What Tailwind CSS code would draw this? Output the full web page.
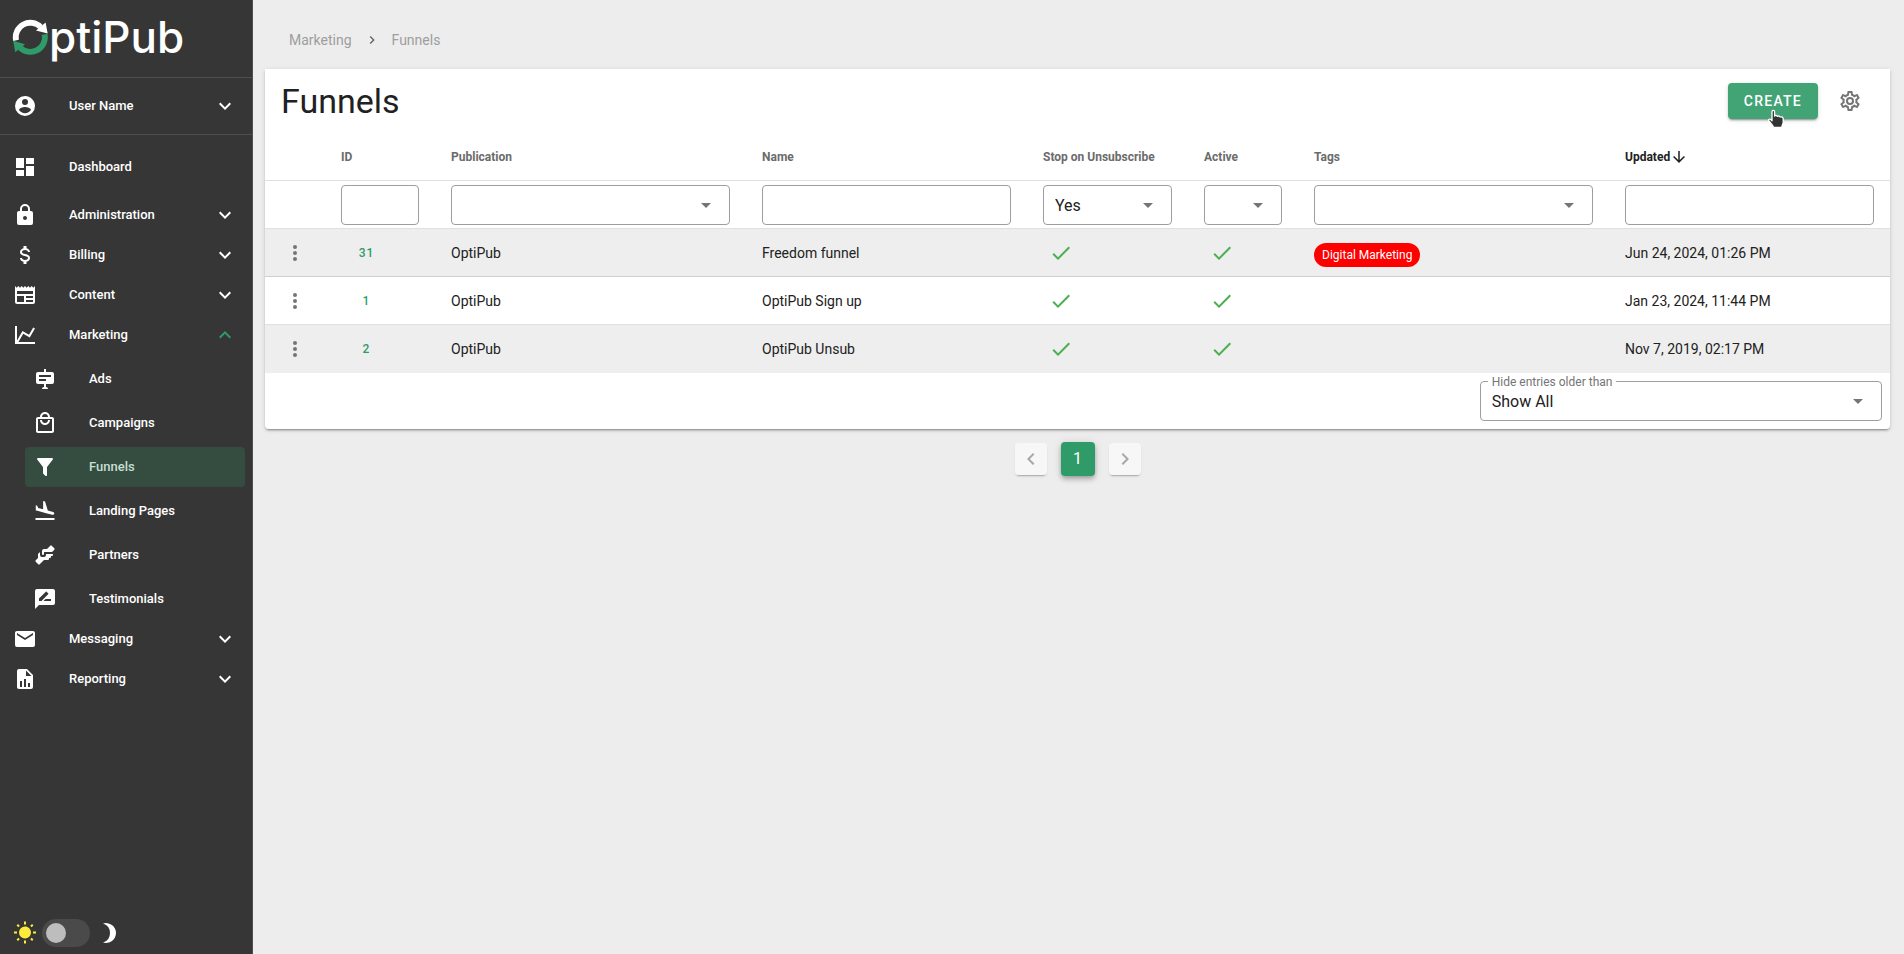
<!DOCTYPE html>
<html lang="en">
<head>
<meta charset="utf-8">
<meta name="viewport" content="width=device-width, initial-scale=1">
<title>Funnels - OptiPub</title>
<script src="https://cdn.jsdelivr.net/npm/@tailwindcss/browser@4"></script>
</head>
<body class="flex min-h-screen bg-[#ededed] font-[Roboto,sans-serif] text-sm text-[#212121]">

<svg class="hidden" aria-hidden="true">
  <symbol id="account" viewBox="0 0 24 24"><path d="M12,19.2C9.5,19.2 7.29,17.92 6,16C6.03,14 10,12.9 12,12.9C14,12.9 17.97,14 18,16C16.71,17.92 14.5,19.2 12,19.2M12,5A3,3 0 0,1 15,8A3,3 0 0,1 12,11A3,3 0 0,1 9,8A3,3 0 0,1 12,5M12,2A10,10 0 0,0 2,12A10,10 0 0,0 12,22A10,10 0 0,0 22,12C22,6.47 17.5,2 12,2Z"/></symbol>
  <symbol id="dashboard" viewBox="0 0 24 24"><path d="M13,3V9H21V3M13,21H21V11H13M3,21H11V15H3M3,13H11V3H3V13Z"/></symbol>
  <symbol id="lock" viewBox="0 0 24 24"><path d="M12,17A2,2 0 0,0 14,15C14,13.89 13.1,13 12,13A2,2 0 0,0 10,15A2,2 0 0,0 12,17M18,8A2,2 0 0,1 20,10V20A2,2 0 0,1 18,22H6A2,2 0 0,1 4,20V10C4,8.89 4.9,8 6,8H7V6A5,5 0 0,1 12,1A5,5 0 0,1 17,6V8H18M12,3A3,3 0 0,0 9,6V8H15V6A3,3 0 0,0 12,3Z"/></symbol>
  <symbol id="dollar" viewBox="0 0 24 24"><path d="M7,15H9C9,16.08 10.37,17 12,17C13.63,17 15,16.08 15,15C15,13.9 13.96,13.5 11.76,12.97C9.64,12.44 7,11.78 7,9C7,7.21 8.47,5.69 10.5,5.18V3H13.5V5.18C15.53,5.69 17,7.21 17,9H15C15,7.92 13.63,7 12,7C10.37,7 9,7.92 9,9C9,10.1 10.04,10.5 12.24,11.03C14.36,11.56 17,12.22 17,15C17,16.79 15.53,18.31 13.5,18.82V21H10.5V18.82C8.47,18.31 7,16.79 7,15Z"/></symbol>
  <symbol id="newspaper" viewBox="0 0 24 24"><path d="M20,11H4V8H20M20,15H13V13H20M20,19H13V17H20M11,19H4V13H11M20.33,4.67L18.67,3L17,4.67L15.33,3L13.67,4.67L12,3L10.33,4.67L8.67,3L7,4.67L5.33,3L3.67,4.67L2,3V19A2,2 0 0,0 4,21H20A2,2 0 0,0 22,19V3L20.33,4.67Z"/></symbol>
  <symbol id="chart" viewBox="0 0 24 24"><path d="M16,11.78L20.24,4.45L21.97,5.45L16.74,14.5L10.23,10.75L5.46,19H22V21H2V3H4V17.54L9.5,8L16,11.78Z"/></symbol>
  <symbol id="billboard" viewBox="0 0 24 24"><path fill-rule="evenodd" d="M11,2H13V5H19A2,2 0 0,1 21,7V15A2,2 0 0,1 19,17H13V20C14.2,20 15,20.8 15,22H9C9,20.8 9.8,20 11,20V17H5A2,2 0 0,1 3,15V7A2,2 0 0,1 5,5H11V2M6,8V10H18V8H6M6,12V14H13V12H6Z"/></symbol>
  <symbol id="bag" viewBox="0 0 24 24"><path d="M19 6H17C17 3.2 14.8 1 12 1S7 3.2 7 6H5C3.9 6 3 6.9 3 8V20C3 21.1 3.9 22 5 22H19C20.1 22 21 21.1 21 20V8C21 6.9 20.1 6 19 6M12 3C13.7 3 15 4.3 15 6H9C9 4.3 10.3 3 12 3M19 20H5V8H19V20M12 12C10.3 12 9 10.7 9 9H7C7 11.8 9.2 14 12 14S17 11.8 17 9H15C15 10.7 13.7 12 12 12Z"/></symbol>
  <symbol id="filter" viewBox="0 0 24 24"><path d="M14,12V19.88C14.04,20.18 13.94,20.5 13.71,20.71C13.32,21.1 12.69,21.1 12.3,20.71L10.29,18.7C10.06,18.47 9.96,18.16 10,17.87V12H9.97L4.21,4.62C3.87,4.19 3.95,3.56 4.38,3.22C4.57,3.08 4.78,3 5,3H19C19.22,3 19.43,3.08 19.62,3.22C20.05,3.56 20.13,4.19 19.79,4.62L14.03,12H14Z"/></symbol>
  <symbol id="landing" viewBox="0 0 24 24"><path d="M2.5,19H21.5V21H2.5V19M9.68,13.27L14.03,14.43L19.34,15.85C20.14,16.06 20.96,15.59 21.18,14.79C21.39,14 20.92,13.17 20.12,12.95L14.81,11.53L12.05,2.5L10.12,2V10.28L5.15,8.95L4.22,6.63L2.77,6.24V11.41L4.37,11.84L9.68,13.27Z"/></symbol>
  <symbol id="handshake" viewBox="0 0 24 24"><path d="M11 6H14L17.29 2.7A1 1 0 0 1 18.71 2.7L21.29 5.29A1 1 0 0 1 21.29 6.7L19 9H11V11A1 1 0 0 1 10 12A1 1 0 0 1 9 11V8A2 2 0 0 1 11 6M5 11V15L2.71 17.29A1 1 0 0 0 2.71 18.71L5.29 21.29A1 1 0 0 0 6.71 21.29L11 17H15A1 1 0 0 0 16 16V15H17A1 1 0 0 0 18 14V13H19A1 1 0 0 0 20 12V11H13V12A2 2 0 0 1 11 14H9A2 2 0 0 1 7 12V9Z"/></symbol>
  <symbol id="message" viewBox="0 0 24 24"><path d="M18,14H10.5L12.5,12H18M6,14V11.5L12.88,4.64C13.07,4.45 13.39,4.45 13.59,4.64L15.35,6.41C15.55,6.61 15.55,6.92 15.35,7.12L8.47,14M20,2H4A2,2 0 0,0 2,4V22L6,18H20A2,2 0 0,0 22,16V4C22,2.89 21.1,2 20,2Z"/></symbol>
  <symbol id="email" viewBox="0 0 24 24"><path d="M20,8L12,13L4,8V6L12,11L20,6M20,4H4C2.89,4 2,4.89 2,6V18A2,2 0 0,0 4,20H20A2,2 0 0,0 22,18V6C22,4.89 21.1,4 20,4Z"/></symbol>
  <symbol id="report" viewBox="0 0 24 24"><path d="M13,9H18.5L13,3.5V9M6,2H14L20,8V20A2,2 0 0,1 18,22H6C4.89,22 4,21.1 4,20V4C4,2.89 4.89,2 6,2M7,20H9V14H7V20M11,20H13V12H11V20M15,20H17V16H15V20Z"/></symbol>
  <symbol id="sun" viewBox="0 0 24 24"><path d="M3.55,18.54L4.96,19.95L6.76,18.16L5.34,16.74M11,22.45C11.32,22.45 13,22.45 13,22.45V19.5H11M12,5.5A6,6 0 0,0 6,11.5A6,6 0 0,0 12,17.5A6,6 0 0,0 18,11.5C18,8.18 15.31,5.5 12,5.5M20,12.5H23V10.5H20M17.24,18.16L19.04,19.95L20.45,18.54L18.66,16.74M20.45,4.46L19.04,3.05L17.24,4.84L18.66,6.26M13,0.55H11V3.5H13M4,10.5H1V12.5H4M6.76,4.84L4.96,3.05L3.55,4.46L5.34,6.26L6.76,4.84Z"/></symbol>
  <symbol id="moon" viewBox="0 0 24 24"><path d="M6 2.46A10 10 0 1 1 6 21.54A10 10 0 0 0 6 2.46Z"/></symbol>
  <symbol id="down" viewBox="0 0 24 24"><path d="M7.41,8.58L12,13.17L16.59,8.58L18,10L12,16L6,10L7.41,8.58Z"/></symbol>
  <symbol id="up" viewBox="0 0 24 24"><path d="M7.41,15.41L12,10.83L16.59,15.41L18,14L12,8L6,14L7.41,15.41Z"/></symbol>
  <symbol id="left" viewBox="0 0 24 24"><path d="M15.41,16.58L10.83,12L15.41,7.41L14,6L8,12L14,18L15.41,16.58Z"/></symbol>
  <symbol id="right" viewBox="0 0 24 24"><path d="M8.59,16.58L13.17,12L8.59,7.41L10,6L16,12L10,18L8.59,16.58Z"/></symbol>
  <symbol id="caret" viewBox="0 0 24 24"><path d="M7,10L12,15L17,10H7Z"/></symbol>
  <symbol id="check" viewBox="0 0 24 24"><path d="M21,7L9,19L3.5,13.5L4.91,12.09L9,16.17L19.59,5.59L21,7Z"/></symbol>
  <symbol id="dots" viewBox="0 0 24 24"><path d="M12,16A2,2 0 0,1 14,18A2,2 0 0,1 12,20A2,2 0 0,1 10,18A2,2 0 0,1 12,16M12,10A2,2 0 0,1 14,12A2,2 0 0,1 12,14A2,2 0 0,1 10,12A2,2 0 0,1 12,10M12,4A2,2 0 0,1 14,6A2,2 0 0,1 12,8A2,2 0 0,1 10,6A2,2 0 0,1 12,4Z"/></symbol>
  <symbol id="arrow" viewBox="0 0 24 24"><path d="M11,4H13V16L18.5,10.5L19.92,11.92L12,19.84L4.08,11.92L5.5,10.5L11,16V4Z"/></symbol>
  <symbol id="cog" viewBox="0 0 24 24"><path d="M12,8A4,4 0 0,1 16,12A4,4 0 0,1 12,16A4,4 0 0,1 8,12A4,4 0 0,1 12,8M12,10A2,2 0 0,0 10,12A2,2 0 0,0 12,14A2,2 0 0,0 14,12A2,2 0 0,0 12,10M10,22C9.75,22 9.54,21.82 9.5,21.58L9.13,18.93C8.5,18.68 7.96,18.34 7.44,17.94L4.95,18.95C4.73,19.03 4.46,18.95 4.34,18.73L2.34,15.27C2.21,15.05 2.27,14.78 2.46,14.63L4.57,12.97L4.5,12L4.57,11L2.46,9.37C2.27,9.22 2.21,8.95 2.34,8.73L4.34,5.27C4.46,5.05 4.73,4.96 4.95,5.05L7.44,6.05C7.96,5.66 8.5,5.32 9.13,5.07L9.5,2.42C9.54,2.18 9.75,2 10,2H14C14.25,2 14.46,2.18 14.5,2.42L14.87,5.07C15.5,5.32 16.04,5.66 16.56,6.05L19.05,5.05C19.27,4.96 19.54,5.05 19.66,5.27L21.66,8.73C21.79,8.95 21.73,9.22 21.54,9.37L19.43,11L19.5,12L19.43,13L21.54,14.63C21.73,14.78 21.79,15.05 21.66,15.27L19.66,18.73C19.54,18.95 19.27,19.04 19.05,18.95L16.56,17.95C16.04,18.34 15.5,18.68 14.87,18.93L14.5,21.58C14.46,21.82 14.25,22 14,22H10M11.25,4L10.88,6.61C9.68,6.86 8.62,7.5 7.85,8.39L5.44,7.35L4.69,8.65L6.8,10.2C6.4,11.37 6.4,12.64 6.8,13.8L4.68,15.36L5.43,16.66L7.86,15.62C8.63,16.5 9.68,17.14 10.87,17.38L11.24,20H12.76L13.13,17.39C14.32,17.14 15.37,16.5 16.14,15.62L18.57,16.66L19.32,15.36L17.2,13.81C17.6,12.64 17.6,11.37 17.2,10.2L19.31,8.65L18.56,7.35L16.15,8.39C15.38,7.5 14.32,6.86 13.12,6.62L12.75,4H11.25Z"/></symbol>
</svg>

<aside class="flex w-[253px] shrink-0 flex-col border-r border-[#4e4e4e] bg-[#363636] text-[13px] font-medium text-white">
  <a href="#" aria-label="OptiPub" class="block h-[77px]">
    <svg class="h-[77px] w-[200px]" viewBox="0 0 200 77">
      <path fill="none" stroke="#fff" stroke-width="5.8" d="M16 40.3A14.6 14.6 0 0 1 40.6 27"/>
      <path fill="#fff" d="M45.6 22.4L47.7 33.6L36 30.6Z"/>
      <path fill="none" stroke="#2f9b68" stroke-width="5.8" d="M44.6 34.3A14.6 14.6 0 0 1 20 47.6"/>
      <path fill="#2f9b68" d="M15.2 52.2L13.2 40.8L25 44.2Z"/>
      <text x="49" y="53" fill="#fff" font-family="Inter, Liberation Sans, sans-serif" font-size="44" font-weight="500">ptiPub</text>
    </svg>
  </a>
  <div class="border-y border-[#4e4e4e]">
    <button type="button" class="flex h-14 w-full items-center pr-[15px] pl-[13px] text-left">
      <svg class="mr-8 size-6 fill-current"><use href="#account"/></svg><span class="flex-1">User Name</span><svg class="size-6 fill-current"><use href="#down"/></svg>
    </button>
  </div>
  <nav class="flex flex-1 flex-col pt-3">
    <a href="#" class="mb-2 flex h-10 items-center pr-[15px] pl-[13px]"><svg class="mr-8 size-6 fill-current"><use href="#dashboard"/></svg>Dashboard</a>
    <button type="button" class="flex h-10 items-center pr-[15px] pl-[13px] text-left"><svg class="mr-8 size-6 fill-current"><use href="#lock"/></svg><span class="flex-1">Administration</span><svg class="size-6 fill-current"><use href="#down"/></svg></button>
    <button type="button" class="flex h-10 items-center pr-[15px] pl-[13px] text-left"><svg class="mr-8 size-6 fill-current"><use href="#dollar"/></svg><span class="flex-1">Billing</span><svg class="size-6 fill-current"><use href="#down"/></svg></button>
    <button type="button" class="flex h-10 items-center pr-[15px] pl-[13px] text-left"><svg class="mr-8 size-6 fill-current"><use href="#newspaper"/></svg><span class="flex-1">Content</span><svg class="size-6 fill-current"><use href="#down"/></svg></button>
    <button type="button" aria-expanded="true" class="flex h-10 items-center pr-[15px] pl-[13px] text-left"><svg class="mr-8 size-6 fill-current"><use href="#chart"/></svg><span class="flex-1">Marketing</span><svg class="size-6 fill-[#2f9b68]"><use href="#up"/></svg></button>
    <div class="flex flex-col gap-1 pt-1 pr-[7px] pl-[25px]">
      <a href="#" class="flex h-10 items-center rounded-sm px-2"><svg class="mr-8 size-6 fill-current"><use href="#billboard"/></svg>Ads</a>
      <a href="#" class="flex h-10 items-center rounded-sm px-2"><svg class="mr-8 size-6 fill-current"><use href="#bag"/></svg>Campaigns</a>
      <a href="#" aria-current="page" class="flex h-10 items-center rounded-sm bg-[#354d40] px-2 text-[#c5dfd2]"><svg class="mr-8 size-6 fill-white"><use href="#filter"/></svg>Funnels</a>
      <a href="#" class="flex h-10 items-center rounded-sm px-2"><svg class="mr-8 size-6 fill-current"><use href="#landing"/></svg>Landing Pages</a>
      <a href="#" class="flex h-10 items-center rounded-sm px-2"><svg class="mr-8 size-6 fill-current"><use href="#handshake"/></svg>Partners</a>
      <a href="#" class="flex h-10 items-center rounded-sm px-2"><svg class="mr-8 size-6 fill-current"><use href="#message"/></svg>Testimonials</a>
    </div>
    <button type="button" class="flex h-10 items-center pr-[15px] pl-[13px] text-left"><svg class="mr-8 size-6 fill-current"><use href="#email"/></svg><span class="flex-1">Messaging</span><svg class="size-6 fill-current"><use href="#down"/></svg></button>
    <button type="button" class="flex h-10 items-center pr-[15px] pl-[13px] text-left"><svg class="mr-8 size-6 fill-current"><use href="#report"/></svg><span class="flex-1">Reporting</span><svg class="size-6 fill-current"><use href="#down"/></svg></button>
  </nav>
  <div class="flex items-center pb-[7px] pl-[13px]">
    <svg class="mr-[5px] size-6 fill-[#ffeb3b]"><use href="#sun"/></svg>
    <input type="checkbox" role="switch" aria-label="Dark theme" class="h-7 w-12 appearance-none rounded-full bg-[#4a4a4a] p-1 before:block before:size-5 before:rounded-full before:bg-[#bdbdbd] checked:before:ml-5">
    <svg class="ml-[7px] size-6 fill-white"><use href="#moon"/></svg>
  </div>
</aside>

<main class="min-w-0 flex-1 pr-[14px] pl-3">
  <nav aria-label="Breadcrumb" class="flex h-[69px] items-center gap-3 px-6 pt-3 pb-0.5 leading-5 text-[#9e9e9e]">
    <a href="#">Marketing</a>
    <svg class="size-4 fill-[#616161]"><use href="#right"/></svg>
    <a href="#">Funnels</a>
  </nav>

  <section class="rounded-b bg-white shadow-[0_3px_1px_-2px_rgba(0,0,0,0.2),0_2px_2px_0_rgba(0,0,0,0.14),0_1px_5px_0_rgba(0,0,0,0.12)]">
    <header class="flex h-16 items-center px-4">
      <h1 class="flex-1 text-[34px] leading-10">Funnels</h1>
      <div class="relative mr-5">
        <button type="button" class="h-9 rounded bg-[#42a374] px-4 text-sm font-medium tracking-[1.25px] text-white shadow-[0_3px_1px_-2px_rgba(0,0,0,0.2),0_2px_2px_0_rgba(0,0,0,0.14),0_1px_5px_0_rgba(0,0,0,0.12)]">CREATE</button>
        <svg class="pointer-events-none absolute top-[26px] left-[39px] h-5 w-[18px]" viewBox="0 0 18 20"><path fill="#333" stroke="#fff" stroke-width="1.3" stroke-linejoin="round" d="M5 2.6C5 .9 7.6 .9 7.6 2.6V7C8.4 6.2 10 6.3 10.4 7.4C11.2 6.7 12.7 7 13.1 8C14.8 7.4 16.2 8.3 16.2 10V13.2C16.2 15.2 14.8 16 14.8 18.4H6.6C6.2 16.4 3.4 14 1.9 12C.9 10.5 2.6 9.5 3.8 10.6L5 11.8Z"/></svg>
      </div>
      <button type="button" aria-label="Settings" class="mr-3 size-6"><svg class="size-6 fill-[#757575]"><use href="#cog"/></svg></button>
    </header>

    <table class="w-full table-fixed border-separate border-spacing-0 text-left">
      <colgroup><col class="w-[60px]"><col class="w-[110px]"><col class="w-[311px]"><col class="w-[281px]"><col class="w-[161px]"><col class="w-[110px]"><col class="w-[311px]"><col class="w-[281px]"></colgroup>
      <thead>
        <tr class="h-12 text-xs text-[#6b6b6b] *:border-b *:border-[#e0e0e0] *:px-4 *:font-bold *:whitespace-nowrap">
          <td></td><th scope="col">ID</th><th scope="col">Publication</th><th scope="col">Name</th><th scope="col">Stop on Unsubscribe</th><th scope="col">Active</th><th scope="col">Tags</th>
          <th scope="col" aria-sort="descending" class="text-[#212121]"><span class="flex items-center">Updated<svg class="size-[18px] fill-current"><use href="#arrow"/></svg></span></th>
        </tr>
        <tr class="h-12 *:border-b *:border-[#e0e0e0] *:px-4">
          <td></td>
          <td><input type="text" aria-label="Filter by ID" class="block h-10 w-full rounded border border-[#9e9e9e] px-3 text-base"></td>
          <td><div class="relative"><select aria-label="Filter by publication" class="block h-10 w-full appearance-none rounded border border-[#9e9e9e] px-[11px] pt-0.5 text-base"><option></option><option>OptiPub</option></select><svg class="pointer-events-none absolute top-2 right-3 size-6 fill-[#757575]"><use href="#caret"/></svg></div></td>
          <td><input type="text" aria-label="Filter by name" class="block h-10 w-full rounded border border-[#9e9e9e] px-3 text-base"></td>
          <td><div class="relative"><select aria-label="Filter by stop on unsubscribe" class="block h-10 w-full appearance-none rounded border border-[#9e9e9e] px-[11px] pt-0.5 text-base"><option>Yes</option><option>No</option></select><svg class="pointer-events-none absolute top-2 right-3 size-6 fill-[#757575]"><use href="#caret"/></svg></div></td>
          <td><div class="relative"><select aria-label="Filter by active" class="block h-10 w-full appearance-none rounded border border-[#9e9e9e] px-[11px] pt-0.5 text-base"><option></option><option>Yes</option><option>No</option></select><svg class="pointer-events-none absolute top-2 right-3 size-6 fill-[#757575]"><use href="#caret"/></svg></div></td>
          <td><div class="relative"><select aria-label="Filter by tags" class="block h-10 w-full appearance-none rounded border border-[#9e9e9e] px-[11px] pt-0.5 text-base"><option></option><option>Digital Marketing</option></select><svg class="pointer-events-none absolute top-2 right-3 size-6 fill-[#757575]"><use href="#caret"/></svg></div></td>
          <td><input type="text" aria-label="Filter by updated date" class="block h-10 w-full rounded border border-[#9e9e9e] px-3 text-base"></td>
        </tr>
      </thead>
      <tbody>
        <tr class="h-12 bg-[#eeeeee] *:border-b *:border-[#cfcfcf] *:px-4">
          <td><button type="button" aria-label="Actions for Freedom funnel" class="ml-0.5 block size-6"><svg class="size-6 fill-[#757575]"><use href="#dots"/></svg></button></td>
          <td><a href="#" class="block w-[51px] text-center text-xs font-medium tracking-[1px] text-[#2f9b68]">31</a></td>
          <td>OptiPub</td><td>Freedom funnel</td>
          <td><svg role="img" aria-label="Yes" class="ml-1.5 size-6 fill-[#4caf50]"><use href="#check"/></svg></td>
          <td><svg role="img" aria-label="Yes" class="ml-1.5 size-6 fill-[#4caf50]"><use href="#check"/></svg></td>
          <td><span class="mt-1 flex h-6 w-fit items-center rounded-full bg-[#ff0000] px-2 text-xs text-white">Digital Marketing</span></td>
          <td>Jun 24, 2024, 01:26 PM</td>
        </tr>
        <tr class="h-12 *:border-b *:border-[#e0e0e0] *:px-4">
          <td><button type="button" aria-label="Actions for OptiPub Sign up" class="ml-0.5 block size-6"><svg class="size-6 fill-[#757575]"><use href="#dots"/></svg></button></td>
          <td><a href="#" class="block w-[51px] text-center text-xs font-medium tracking-[1px] text-[#2f9b68]">1</a></td>
          <td>OptiPub</td><td>OptiPub Sign up</td>
          <td><svg role="img" aria-label="Yes" class="ml-1.5 size-6 fill-[#4caf50]"><use href="#check"/></svg></td>
          <td><svg role="img" aria-label="Yes" class="ml-1.5 size-6 fill-[#4caf50]"><use href="#check"/></svg></td>
          <td></td>
          <td>Jan 23, 2024, 11:44 PM</td>
        </tr>
        <tr class="h-12 bg-[#eeeeee] *:px-4">
          <td><button type="button" aria-label="Actions for OptiPub Unsub" class="ml-0.5 block size-6"><svg class="size-6 fill-[#757575]"><use href="#dots"/></svg></button></td>
          <td><a href="#" class="block w-[51px] text-center text-xs font-medium tracking-[1px] text-[#2f9b68]">2</a></td>
          <td>OptiPub</td><td>OptiPub Unsub</td>
          <td><svg role="img" aria-label="Yes" class="ml-1.5 size-6 fill-[#4caf50]"><use href="#check"/></svg></td>
          <td><svg role="img" aria-label="Yes" class="ml-1.5 size-6 fill-[#4caf50]"><use href="#check"/></svg></td>
          <td></td>
          <td>Nov 7, 2019, 02:17 PM</td>
        </tr>
      </tbody>
    </table>

    <div class="flex justify-end p-2">
      <div class="relative w-1/4">
        <label for="age" class="absolute -top-[7px] left-2 bg-white px-1 text-xs text-[#757575]">Hide entries older than</label>
        <select id="age" class="block h-10 w-full appearance-none rounded border border-[#9e9e9e] px-[11px] pt-0.5 text-base"><option>Show All</option></select>
        <svg class="pointer-events-none absolute top-2 right-3 size-6 fill-[#757575]"><use href="#caret"/></svg>
      </div>
    </div>
  </section>

  <nav aria-label="Pagination" class="mt-[13px] flex items-center justify-center gap-[14px]">
    <button type="button" aria-label="Previous page" disabled class="flex size-8 items-center justify-center rounded bg-[#f7f7f7] shadow-[0_3px_1px_-2px_rgba(0,0,0,0.2),0_2px_2px_0_rgba(0,0,0,0.08)]"><svg class="size-6 fill-[#a8a8a8]"><use href="#left"/></svg></button>
    <button type="button" aria-current="page" class="size-[34px] rounded bg-[#2f9b68] text-base text-white shadow-[0_2px_4px_-1px_rgba(0,0,0,0.2),0_4px_5px_0_rgba(0,0,0,0.14),0_1px_10px_0_rgba(0,0,0,0.12)]">1</button>
    <button type="button" aria-label="Next page" disabled class="flex size-8 items-center justify-center rounded bg-[#f7f7f7] shadow-[0_3px_1px_-2px_rgba(0,0,0,0.2),0_2px_2px_0_rgba(0,0,0,0.08)]"><svg class="size-6 fill-[#a8a8a8]"><use href="#right"/></svg></button>
  </nav>
</main>
</body>
</html>
